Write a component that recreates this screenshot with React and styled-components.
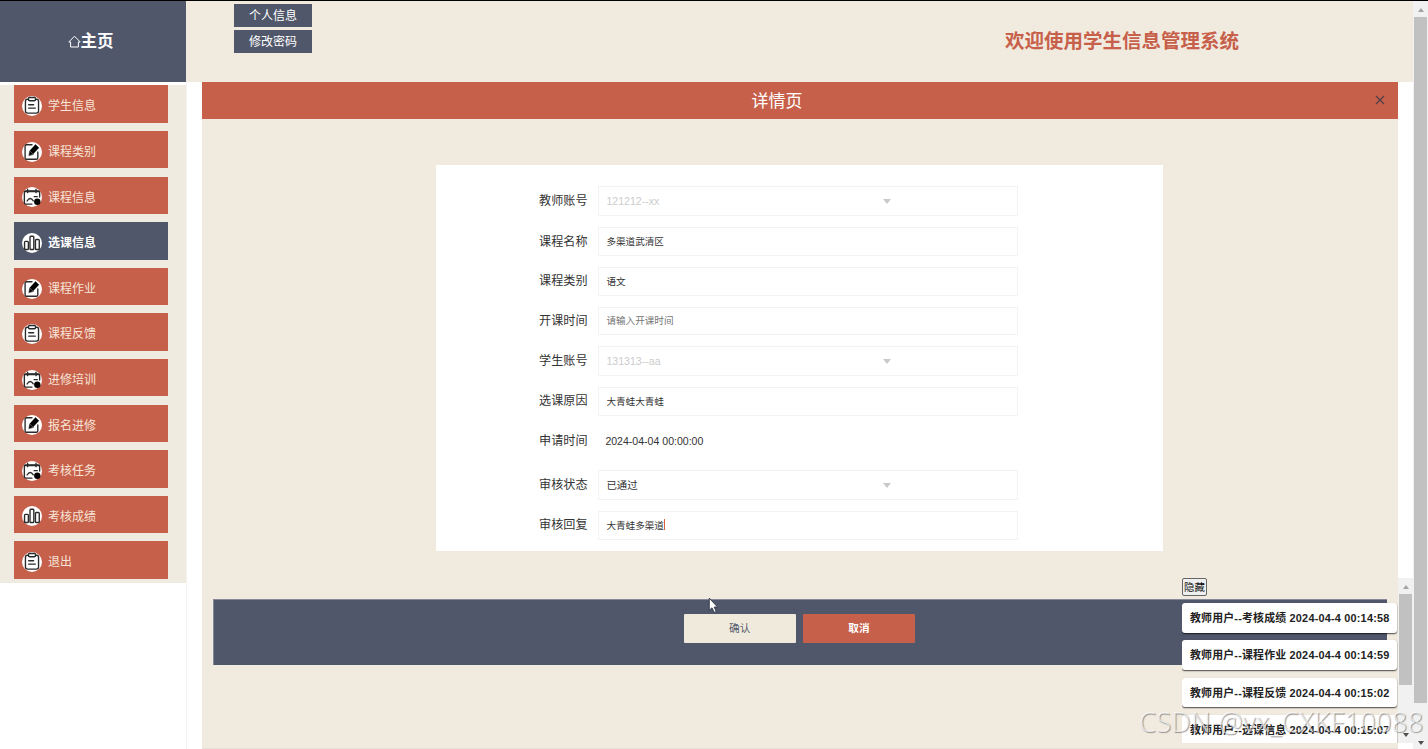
import React from "react";
import styled, { createGlobalStyle, css } from "styled-components";

const navy = "#50576a";
const brick = "#c7604a";
const cream = "#f1eadf";

const Global = createGlobalStyle`
  * { box-sizing: border-box; }
  body {
    margin: 0;
    overflow: hidden;
    background: #fff;
    font-family: "Liberation Sans", "Noto Sans CJK SC", sans-serif;
    font-size: 12px;
    color: #333;
  }
  button, input { font-family: inherit; }
`;

const Page = styled.div`
  position: relative;
  width: 1428px;
  height: 749px;
  display: flex;
  border-top: 1px solid #000;
  overflow: hidden;
`;
const Content = styled.div`
  width: 1413px;
  display: flex;
  flex-direction: column;
`;
const Header = styled.header`
  height: 81px;
  display: flex;
  background: ${cream};
`;
const HomeLink = styled.a`
  width: 186px;
  display: flex;
  align-items: center;
  justify-content: center;
  padding: 0 5px 3px 0;
  background: ${navy};
  color: #fff;
  font-size: 16.5px;
  font-weight: 700;
  svg { margin-top: 3px; }
`;
const AccountLinks = styled.nav`
  display: flex;
  flex-direction: column;
  gap: 3px;
  padding: 3.4px 0 0 48px;
`;
const AccountLink = styled.a`
  width: 78px;
  height: 23px;
  line-height: 25px;
  background: ${navy};
  color: #fff;
  text-align: center;
  font-size: 12px;
`;
const SystemTitle = styled.h1`
  margin: 0 174px 0 auto;
  line-height: 81px;
  font-size: 19.5px;
  font-weight: 700;
  color: ${brick};
`;
const Body = styled.div`
  flex: 1;
  display: flex;
  min-height: 0;
`;
const Sidebar = styled.aside`
  width: 187px;
  padding-top: 3px;
  border-right: 1px solid #f3f3f3;
`;
const Menu = styled.ul`
  height: 498px;
  margin: 0;
  padding: 0.4px 0 0 14.3px;
  list-style: none;
  background: #efebe0;
`;
const MenuItem = styled.li`
  width: 154px;
  height: 37.5px;
  margin-bottom: 8.1px;
  display: flex;
  align-items: center;
  gap: 6px;
  padding: 4px 0 0 7.7px;
  background: ${(p) => (p.$active ? navy : brick)};
  color: ${(p) => (p.$active ? "#fff" : "#f6e5d8")};
  font-weight: ${(p) => (p.$active ? 700 : 400)};
  span { margin-bottom: 2.4px; }
`;
const Panel = styled.main`
  width: 1196px;
  margin-left: 15px;
  background: ${cream};
  border-bottom: 1px solid #e6e1d9;
`;
const PanelTitle = styled.div`
  position: relative;
  height: 37px;
  line-height: 39px;
  padding-right: 46px;
  background: ${brick};
  color: #fff;
  text-align: center;
  font-size: 17px;
`;
const Close = styled.svg`
  position: absolute;
  right: 13px;
  top: 13px;
`;
const Form = styled.form`
  width: 727px;
  height: 386px;
  margin: 46px 0 48px 234px;
  padding: 21.4px 0 0 96.5px;
  background: #fff;
`;
const Row = styled.div`
  display: flex;
  align-items: center;
  height: ${(p) => p.$h}px;
  margin-bottom: ${(p) => p.$gap ?? 11}px;
`;
const Label = styled.label`
  width: 55px;
  margin: 0 10.5px 0 0;
  text-align: right;
  font-size: 12.1px;
  line-height: 20px;
  color: #333;
`;
const fieldBox = css`
  width: 419.5px;
  height: 100%;
  border: 1px solid #f3f3f3;
  background: #fff;
  font-size: 9.6px;
`;
const Input = styled.input`
  ${fieldBox}
  padding: 0 7.4px 0.8px;
  color: #333;
  outline: none;
  &::placeholder { color: #757575; }
`;
const Select = styled.div`
  ${fieldBox}
  display: flex;
  align-items: center;
  padding: 0 7.4px;
  font-size: ${(p) => (p.$disabled ? 10.6 : 10.4)}px;
  color: ${(p) => (p.$disabled ? "#ccc" : "#333")};
  > span { width: 277px; }
`;
const Caret = styled.i`
  border: 4.5px solid transparent;
  border-top: 5px solid #c9c9c9;
  border-bottom: 0;
  margin-top: 0.4px;
`;
const Stamp = styled.span`
  padding: 0 0 0 7.4px;
  font-size: 10.55px;
  color: #333;
`;
const InputCaret = styled.i`
  width: 1px;
  height: 11px;
  background: #d9603c;
`;
const FocusedField = styled.div`
  ${fieldBox}
  padding: 0 7.4px 0.8px;
  display: flex;
  align-items: center;
`;
const Actions = styled.div`
  width: 1174px;
  height: 66px;
  margin-left: 11px;
  padding: 14px 2.4px 0 0;
  display: flex;
  justify-content: center;
  gap: 7px;
  background: ${navy};
  border: 1px solid #85889a;
  border-width: 1px 0 0 1px;
`;
const Action = styled.button`
  width: 112.2px;
  height: 28.5px;
  padding: 0 0 1px;
  border: 0;
  border-radius: 1px;
  background: ${(p) => (p.$primary ? "#f0eadc" : brick)};
  color: ${(p) => (p.$primary ? "#555b6c" : "#fff")};
  font-size: 10.6px;
  font-weight: ${(p) => (p.$primary ? 400 : 700)};
`;
const Notices = styled.aside`
  position: absolute;
  left: 1182px;
  top: 577px;
  width: 231px;
  height: 165px;
  overflow: hidden;
  display: flex;
`;
const NoticeList = styled.div`
  width: 216px;
`;
const Hide = styled.button`
  display: block;
  width: 25px;
  height: 18px;
  margin: 0 0 7px;
  padding: 1px 0 0;
  border: 1px solid #666;
  border-radius: 2px;
  background: #efefef;
  color: #111;
  font-size: 10.4px;
  line-height: 14px;
`;
const Notice = styled.div`
  width: 215px;
  height: 29.5px;
  margin-bottom: 7.9px;
  padding-left: 8px;
  border-radius: 3px;
  background: #fff;
  box-shadow: 0 1px 1.5px rgba(0, 0, 0, 0.7);
  color: #222;
  font-size: 10.9px;
  letter-spacing: 0.2px;
  font-weight: 700;
  line-height: 31px;
  white-space: nowrap;
`;
const Track = styled.div`
  width: 15px;
  display: flex;
  flex-direction: column;
  align-items: center;
  background: #f1f1f1;
  padding: ${(p) => (p.$outer ? "7px 0 4px" : "7px 0 6px")};
`;
const Thumb = styled.div`
  width: 13px;
  height: ${(p) => p.$h}px;
  margin-top: ${(p) => p.$top}px;
  background: #c1c1c1;
`;
const Arrow = styled.i`
  border: 3.5px solid transparent;
  ${(p) => (p.$down ? "border-top: 4px solid #505050; border-bottom: 0; margin-top: auto;" : "border-bottom: 4px solid #a3a3a3; border-top: 0;")}
`;
const Watermark = styled.div`
  position: absolute;
  left: 1139px;
  top: 705px;
  font-size: 27px;
  letter-spacing: 0.4px;
  line-height: 32px;
  font-family: "Noto Sans", sans-serif;
  font-weight: 300;
  white-space: nowrap;
  color: rgba(255, 255, 255, 0.65);
  text-shadow: 1px 1px 1px rgba(90, 90, 90, 0.6);
`;
const Pointer = styled.svg`
  position: absolute;
  left: 708px;
  top: 596px;
`;

const glyphs = {
  clipboard: (
    <>
      <rect x="3.8" y="3.6" width="14.4" height="15.2" rx="2.2" />
      <rect x="7.2" y="1.6" width="7.6" height="3.6" rx="1" fill="#fff" />
      <path d="M7.4 9.6h5.4M7.4 13.4h7.2" />
    </>
  ),
  edit: (
    <>
      <path d="M11 3H5Q3.4 3 3.4 4.8v12.4Q3.4 19 5 19h10.6q1.8 0 1.8-1.8V11" />
      <path d="M10.4 11.4 16.8 4.4" strokeWidth="5.4" stroke="#000" strokeLinecap="butt" />
      <path d="M7.6 14.8 8.4 10l4 3.4Z" fill="#000" strokeWidth=".6" />
    </>
  ),
  calendar: (
    <>
      <path d="M11 18.8H4.4q-1.8 0-1.8-1.8V6Q2.6 4.2 4.4 4.2h13.2q1.8 0 1.8 1.8v5" />
      <path d="M6.2 2.4v3.8M15.4 2.4v3.8M3 5h16" />
      <path d="M5.6 15.4q3.4-5.4 6.8-.2M13.4 10.6h3.4" />
      <circle cx="16.8" cy="16.2" r="3.5" fill="#000" stroke="none" />
    </>
  ),
  chart: (
    <>
      <rect x="2.8" y="9.2" width="4.2" height="9" rx="1" />
      <rect x="8.8" y="3.6" width="4.2" height="14.6" rx="1" />
      <rect x="14.8" y="7.2" width="4.2" height="11" rx="1" />
    </>
  ),
};

const MenuIcon = ({ name }) => (
  <svg width="20" height="20" viewBox="0 0 22 22" fill="none" stroke="#2a2a2a" strokeWidth="1.5" strokeLinecap="round" strokeLinejoin="round">
    <circle cx="11" cy="11" r="11" fill="#fff" stroke="none" />
    {glyphs[name]}
  </svg>
);

const menu = [
  ["学生信息", "clipboard"],
  ["课程类别", "edit"],
  ["课程信息", "calendar"],
  ["选课信息", "chart"],
  ["课程作业", "edit"],
  ["课程反馈", "clipboard"],
  ["进修培训", "calendar"],
  ["报名进修", "edit"],
  ["考核任务", "calendar"],
  ["考核成绩", "chart"],
  ["退出", "clipboard"],
];

const notices = [
  "教师用户--考核成绩 2024-04-4 00:14:58",
  "教师用户--课程作业 2024-04-4 00:14:59",
  "教师用户--课程反馈 2024-04-4 00:15:02",
  "教师用户--选课信息 2024-04-4 00:15:07",
];

const TextRow = ({ label, ...rest }) => (
  <Row $h={28.7}>
    <Label>{label}</Label>
    <Input {...rest} />
  </Row>
);

const SelectRow = ({ label, value, disabled }) => (
  <Row $h={29.8}>
    <Label>{label}</Label>
    <Select $disabled={disabled}>
      <span>{value}</span>
      <Caret />
    </Select>
  </Row>
);

export default function App() {
  return (
    <>
      <Global />
      <Page>
        <Content>
          <Header>
            <HomeLink>
              <svg width="13" height="13" viewBox="0 0 13 13" fill="none" stroke="#fff" strokeWidth="1">
                <path d="M.8 7 6.5 1.2 12.2 7H10.4v5H2.6V7Z" />
              </svg>
              主页
            </HomeLink>
            <AccountLinks>
              <AccountLink>个人信息</AccountLink>
              <AccountLink>修改密码</AccountLink>
            </AccountLinks>
            <SystemTitle>欢迎使用学生信息管理系统</SystemTitle>
          </Header>
          <Body>
            <Sidebar>
              <Menu>
                {menu.map(([text, icon]) => (
                  <MenuItem key={text} $active={text === "选课信息"}>
                    <MenuIcon name={icon} />
                    <span>{text}</span>
                  </MenuItem>
                ))}
              </Menu>
            </Sidebar>
            <Panel>
              <PanelTitle>
                详情页
                <Close width="10" height="10" viewBox="0 0 10 10" stroke="#50404a" strokeWidth="1.3">
                  <path d="M1 1l8 8M9 1 1 9" />
                </Close>
              </PanelTitle>
              <Form>
                <SelectRow label="教师账号" value="121212--xx" disabled />
                <TextRow label="课程名称" defaultValue="多渠道武清区" />
                <TextRow label="课程类别" defaultValue="语文" />
                <TextRow label="开课时间" placeholder="请输入开课时间" />
                <SelectRow label="学生账号" value="131313--aa" disabled />
                <TextRow label="选课原因" defaultValue="大青蛙大青蛙" />
                <Row $h={28.7} $gap={14.6}>
                  <Label>申请时间</Label>
                  <Stamp>2024-04-04 00:00:00</Stamp>
                </Row>
                <SelectRow label="审核状态" value="已通过" />
                <Row $h={28.7}>
                  <Label>审核回复</Label>
                  <FocusedField>
                    大青蛙多渠道
                    <InputCaret />
                  </FocusedField>
                </Row>
              </Form>
              <Actions>
                <Action type="button" $primary>确认</Action>
                <Action type="button">取消</Action>
              </Actions>
            </Panel>
          </Body>
        </Content>
        <Track $outer>
          <Arrow />
          <Thumb $h={686} $top={5} />
          <Arrow $down />
        </Track>
        <Notices>
          <NoticeList>
            <Hide type="button">隐藏</Hide>
            {notices.map((text) => (
              <Notice key={text}>{text}</Notice>
            ))}
          </NoticeList>
          <Track>
            <Arrow />
            <Thumb $h={91} $top={5} />
            <Arrow $down />
          </Track>
        </Notices>
        <Pointer width="11" height="17" viewBox="0 0 10 16">
          <path d="M1 1v11.5l2.6-2.3 2 4.3 2-.9-2-4.1h3.2Z" fill="#fff" stroke="#333a4c" strokeWidth=".9" />
        </Pointer>
        <Watermark>CSDN @vx_CXKF10088</Watermark>
      </Page>
    </>
  );
}
